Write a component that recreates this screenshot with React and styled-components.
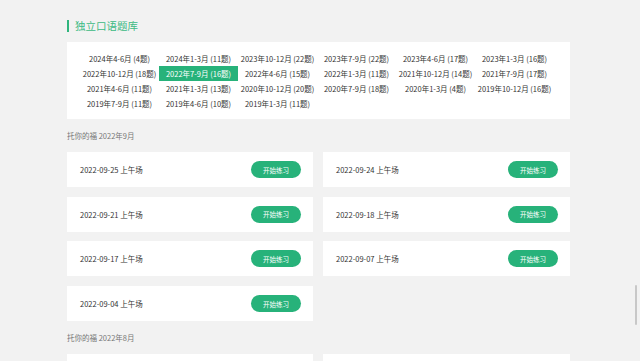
import React from "react";
import styled, { createGlobalStyle } from "styled-components";

const GlobalStyle = createGlobalStyle`
  html, body {
    margin: 0;
    padding: 0;
    background: #f2f2f2;
    font-family: "Noto Sans CJK SC", "Noto Sans", "Liberation Sans", sans-serif;
  }
`;

const periods = [
  "2024年4-6月 (4题)",
  "2024年1-3月 (11题)",
  "2023年10-12月 (22题)",
  "2023年7-9月 (22题)",
  "2023年4-6月 (17题)",
  "2023年1-3月 (16题)",
  "2022年10-12月 (18题)",
  "2022年7-9月 (16题)",
  "2022年4-6月 (15题)",
  "2022年1-3月 (11题)",
  "2021年10-12月 (14题)",
  "2021年7-9月 (17题)",
  "2021年4-6月 (11题)",
  "2021年1-3月 (13题)",
  "2020年10-12月 (20题)",
  "2020年7-9月 (18题)",
  "2020年1-3月 (4题)",
  "2019年10-12月 (16题)",
  "2019年7-9月 (11题)",
  "2019年4-6月 (10题)",
  "2019年1-3月 (11题)",
];

const sessions = [
  "2022-09-25 上午场",
  "2022-09-24 上午场",
  "2022-09-21 上午场",
  "2022-09-18 上午场",
  "2022-09-17 上午场",
  "2022-09-07 上午场",
  "2022-09-04 上午场",
];

const App = () => {
  return (
    <Page>
      <GlobalStyle />
      <Title>独立口语题库</Title>
      <PeriodPanel>
        {periods.map((p, i) => (
          <Period key={p} active={i === 7}>
            {p}
          </Period>
        ))}
      </PeriodPanel>

      <MonthLabel>托你的福 2022年9月</MonthLabel>
      <CardGrid>
        {sessions.map((s) => (
          <Card key={s}>
            <span>{s}</span>
            <StartButton>开始练习</StartButton>
          </Card>
        ))}
      </CardGrid>

      <MonthLabel>托你的福 2022年8月</MonthLabel>
      <CardGrid>
        <Card>
          <span>2022-08-28 上午场</span>
          <StartButton>开始练习</StartButton>
        </Card>
        <Card>
          <span>2022-08-27 上午场</span>
          <StartButton>开始练习</StartButton>
        </Card>
      </CardGrid>
      <ScrollThumb />
    </Page>
  );
};

const Page = styled.div`
  width: 503px;
  height: 341px;
  overflow: hidden;
  padding: 20px 0 0 67px;
  box-sizing: content-box;
`;

const Title = styled.h2`
  margin: 0 0 10px;
  padding-left: 6px;
  border-left: 2px solid #2fb57d;
  height: 12px;
  line-height: 12px;
  font-size: 10.5px;
  font-weight: normal;
  color: #3dba84;
`;

const PeriodPanel = styled.div`
  background: #fff;
  display: grid;
  grid-template-columns: repeat(6, 79px);
  grid-auto-rows: 15px;
  padding: 9px 16px 8px 13px;
`;

const Period = styled.div`
  display: flex;
  align-items: center;
  justify-content: center;
  font-size: 7.5px;
  white-space: nowrap;
  color: ${(p) => (p.active ? "#fff" : "#333")};
  background: ${(p) => (p.active ? "#27b27a" : "transparent")};
`;

const MonthLabel = styled.div`
  margin: 11px 0 10px;
  font-size: 7.5px;
  line-height: 12px;
  color: #777;
`;

const CardGrid = styled.div`
  display: grid;
  grid-template-columns: 246px 247px;
  column-gap: 10px;
  row-gap: 9.7px;
`;

const Card = styled.div`
  background: #fff;
  height: 35px;
  display: flex;
  align-items: center;
  justify-content: space-between;
  padding: 0 12px 0 13px;
  font-size: 7.5px;
  color: #333;
`;

const StartButton = styled.button`
  width: 50px;
  height: 17px;
  border: none;
  border-radius: 9px;
  background: #27b27a;
  color: #fff;
  font-family: inherit;
  font-size: 6.5px;
  padding: 0;
`;

const ScrollThumb = styled.div`
  position: fixed;
  right: 3px;
  top: 285px;
  width: 2px;
  height: 40px;
  background: #c8c8c8;
  border-radius: 1px;
`;

export default App;
